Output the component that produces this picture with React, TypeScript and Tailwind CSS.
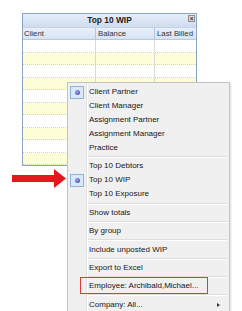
import React from "react";

type Item = { label: string; checked?: boolean; sub?: boolean; boxed?: boolean };

const groups: Item[][] = [
  [
    { label: "Client Partner", checked: true },
    { label: "Client Manager" },
    { label: "Assignment Partner" },
    { label: "Assignment Manager" },
    { label: "Practice" },
  ],
  [{ label: "Top 10 Debtors" }, { label: "Top 10 WIP", checked: true }, { label: "Top 10 Exposure" }],
  [{ label: "Show totals" }],
  [{ label: "By group" }],
  [{ label: "Include unposted WIP" }],
  [{ label: "Export to Excel" }],
  [{ label: "Employee: Archibald,Michael...", boxed: true }],
  [{ label: "Company: All...", sub: true }],
];

function CheckMark() {
  return (
    <div className="flex h-[13px] w-[14px] items-center justify-center border border-[#8fb4dc] bg-[#d8e8f8]">
      <div className="h-[5px] w-[5px] rounded-full bg-[radial-gradient(circle_at_35%_35%,#9aa6e8,#3b3f9a)]" />
    </div>
  );
}

function MenuRow({ item }: { item: Item }) {
  return (
    <div className="relative flex h-[14px] items-center">
      <div className="flex w-[18px] shrink-0 items-center justify-center">
        {item.checked && <CheckMark />}
      </div>
      <div className="flex-1 pl-[3px] text-[8px] leading-none text-[#161616]">{item.label}</div>
      {item.sub && <div className="mr-[9px] h-0 w-0 border-y-[2.5px] border-l-[3px] border-y-transparent border-l-[#333]" />}
      {item.boxed && (
        <div className="absolute left-[12px] top-[-2px] h-[17px] w-[128px] border border-[#e0393e]" />
      )}
    </div>
  );
}

function ContextMenu() {
  return (
    <div className="absolute left-[67px] top-[82px] w-[163px] border border-[#c4c4c4] bg-[#f0f0f0] py-[2px] shadow-[1px_1px_2px_rgba(0,0,0,0.15)]">
      <div className="absolute bottom-0 left-[18px] top-0 w-px bg-[#e2e2e2]" />
      <div className="absolute bottom-0 left-[19px] top-0 w-px bg-white" />
      {groups.map((g, gi) => (
        <div key={gi}>
          {gi > 0 && (
            <div className="my-[1.2px] ml-[20px] mr-[2px] h-[2px] border-b border-t border-b-white border-t-[#dcdcdc]" />
          )}
          {g.map((it) => (
            <MenuRow key={it.label} item={it} />
          ))}
        </div>
      ))}
    </div>
  );
}

function WipWindow() {
  const rows = Array.from({ length: 10 });
  return (
    <div className="ml-[22px] w-[175px] border border-[#8aa4c4] bg-white">
      <div className="relative flex h-[13px] items-center justify-center bg-[linear-gradient(#e6eef9,#cfdcef)] text-[8.4px] font-bold leading-none text-[#222]">
        Top 10 WIP
        <div className="absolute right-[1px] top-[1px] flex h-[7px] w-[7px] items-center justify-center border border-[#8c8c8c] bg-[#e4e4e4] text-[7px] font-bold leading-none text-[#333]">
          ×
        </div>
      </div>
      <div className="flex h-[13px] items-center border-b border-t border-b-[#b8c8dc] border-t-[#c4d4e8] bg-[linear-gradient(#e8f0fb,#d6e3f5)] text-[7.8px] leading-none text-[#333]">
        <div className="w-[72px] pl-[1px]">Client</div>
        <div className="h-full w-[59px] border-l border-[#b7c6d8] pl-[2px] leading-[12px]">Balance</div>
        <div className="h-full flex-1 border-l border-[#b7c6d8] pl-[2px] leading-[12px]">Last Billed</div>
      </div>
      {rows.map((_, i) => (
        <div
          key={i}
          className={`flex h-[12.5px] border-b border-dotted border-[#d2d2c4] ${i % 2 === 1 ? "bg-[#fdfdd8]" : "bg-white"}`}
        >
          <div className="w-[72px]" />
          <div className="w-[59px] border-l border-[#d8d8d8]" />
          <div className="flex-1 border-l border-[#d8d8d8]" />
        </div>
      ))}
    </div>
  );
}

function RedArrow() {
  return (
    <svg className="absolute left-[11px] top-[169px]" width="56" height="19" viewBox="0 0 56 19">
      <path d="M1 6 H43 V0 L55 9.5 L43 19 V13 H1 Z" fill="#e5161c" />
    </svg>
  );
}

export default function App() {
  return (
    <div
      className="relative h-[311px] w-[242px] overflow-hidden bg-white pt-[13px]"
      style={{ fontFamily: '"Liberation Sans", Arial, sans-serif' }}
    >
      <WipWindow />
      <ContextMenu />
      <RedArrow />
    </div>
  );
}
